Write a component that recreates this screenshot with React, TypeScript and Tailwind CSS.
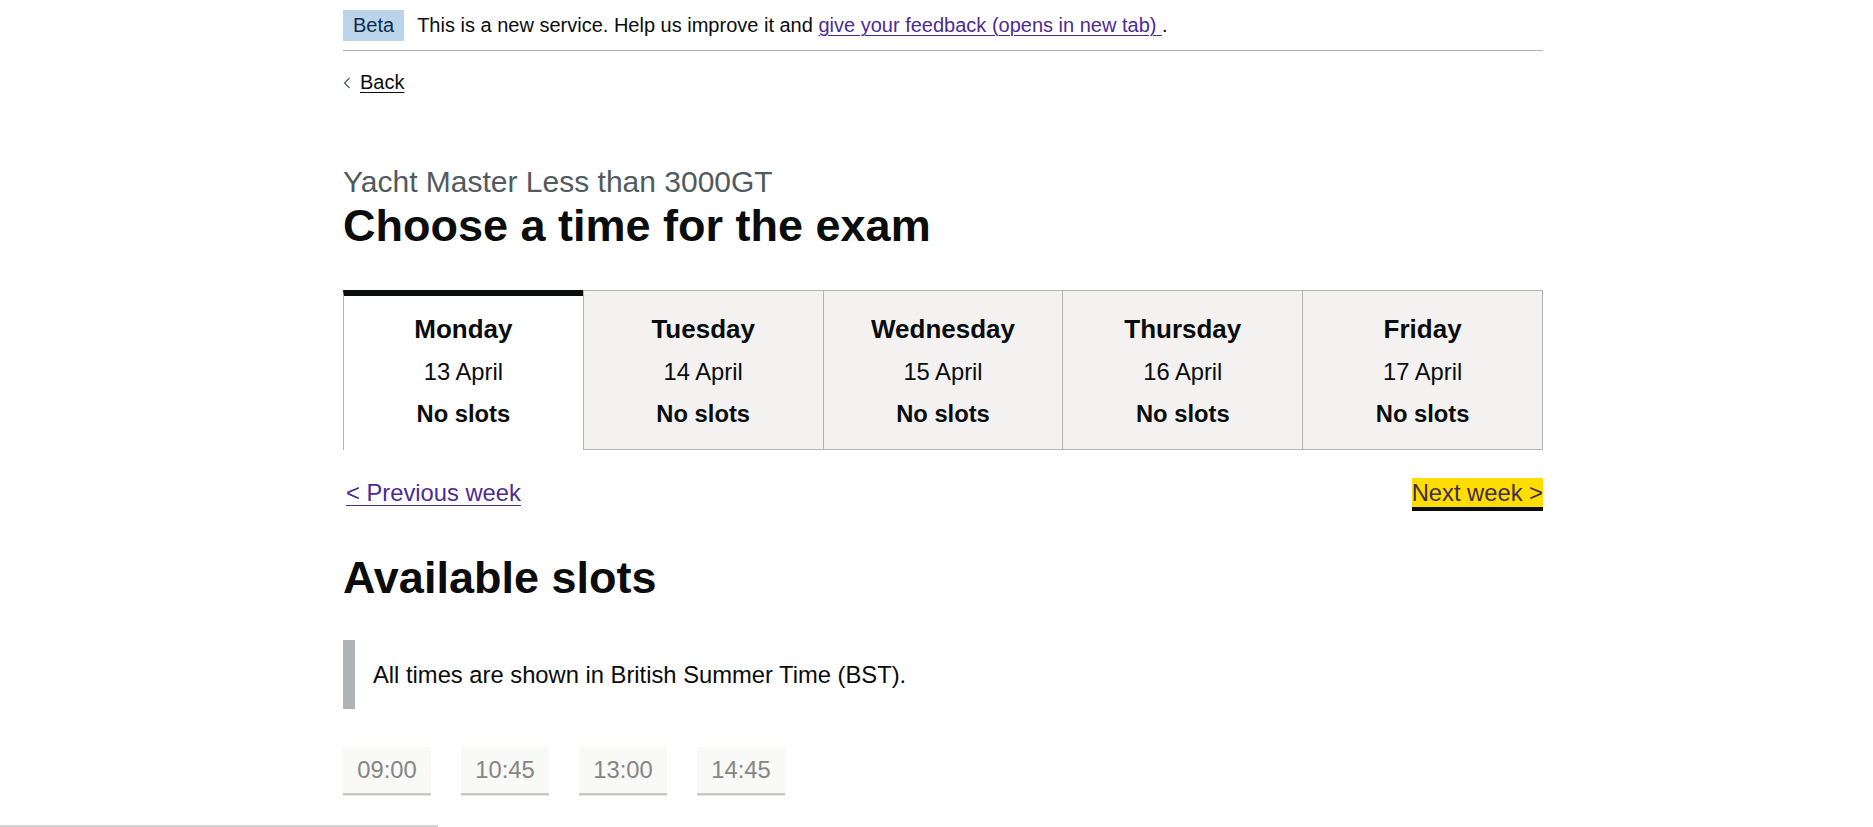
import React from "react";

const days = [
  { name: "Monday", date: "13 April", selected: true },
  { name: "Tuesday", date: "14 April" },
  { name: "Wednesday", date: "15 April" },
  { name: "Thursday", date: "16 April" },
  { name: "Friday", date: "17 April" },
];

const times = ["09:00", "10:45", "13:00", "14:45"];

function DayTab({ name, date, selected }: { name: string; date: string; selected?: boolean }) {
  return (
    <div
      className={
        selected
          ? "h-[160px] pt-[13px] text-center bg-white border-t-[6px] border-t-[#0b0c0c] border-l border-l-[#b1b4b6]"
          : "h-[160px] pt-[18px] text-center bg-[#f3f2f1] border-t border-b border-l border-[#b1b4b6]"
      }
    >
      <div className="h-[42px] leading-[40px] text-[26px] font-bold">{name}</div>
      <div className="h-[42px] leading-[42px] text-[23.75px]">{date}</div>
      <div className="h-[42px] leading-[42px] text-[23.75px] font-bold">No slots</div>
    </div>
  );
}

export default function App() {
  return (
    <div className="min-h-[827px] bg-white font-['Liberation_Sans',Arial,sans-serif] text-[#0b0c0c]">
      <div className="ml-[343px] w-[1200px]">
        {/* phase banner */}
        <div className="flex items-center pt-[10px] pb-[9px] border-b border-[#b1b4b6]">
          <span className="h-[31px] px-[10px] bg-[#bbd4ea] text-[#0c2d4a] text-[20px] leading-[31px]">Beta</span>
          <p className="ml-[13px] text-[20px] leading-[25px]">
            This is a new service. Help us improve it and{" "}
            <a href="#" className="text-[#4c2c92] underline decoration-1 underline-offset-[3px]">
              give your feedback (opens in new tab){" "}
            </a>
            .
          </p>
        </div>

        {/* back link */}
        <a href="#" className="mt-[19px] flex items-center h-[25px] w-fit text-[20px] leading-[25px]">
          <svg width="8" height="12" viewBox="0 0 8 12" className="mr-[9px] mt-[1px]">
            <polyline points="6.5,1 1.5,6 6.5,11" fill="none" stroke="#505a5f" strokeWidth="1.2" />
          </svg>
          <span className="underline decoration-1 underline-offset-[3px]">Back</span>
        </a>

        {/* headings */}
        <span className="mt-[69px] mb-[2px] block text-[30px] leading-[35px] text-[#505a5f]">Yacht Master Less than 3000GT</span>
        <h1 className="text-[45px] leading-[50px] font-bold">Choose a time for the exam</h1>

        {/* day tabs */}
        <div className="mt-[39px] grid grid-cols-5 border-r border-[#b1b4b6]">
          {days.map((d) => (
            <DayTab key={d.name} {...d} />
          ))}
        </div>

        {/* week navigation */}
        <div className="mt-[28px] flex items-start justify-between">
          <a href="#" className="ml-[3px] h-[29px] text-[23.75px] leading-[29px] text-[#4c2c92] underline decoration-1 underline-offset-[4px]">
            &lt; Previous week
          </a>
          <a href="#" className="h-[29px] text-[23.75px] leading-[29px] bg-[#ffdd00] text-[#3f2d56] no-underline shadow-[0_4px_0_#0b0c0c]">
            Next week &gt;
          </a>
        </div>

        <h2 className="mt-[46px] text-[45px] leading-[50px] font-bold">Available slots</h2>

        {/* inset text */}
        <div className="mt-[37px] border-l-[12px] border-[#b1b4b6] py-[19px] pl-[18px] text-[23.75px] leading-[31px]">
          All times are shown in British Summer Time (BST).
        </div>

        {/* time slots */}
        <div className="mt-[38px] flex gap-[30px]">
          {times.map((t) => (
            <button
              key={t}
              disabled
              className="h-[46px] w-[88px] bg-[#f9f9f8] text-[#858585] text-[23.75px] leading-[46px] text-center shadow-[0_2.5px_0_#c8c8c8]"
            >
              {t}
            </button>
          ))}
        </div>
      </div>

      {/* scrollbar thumb at bottom edge */}
      <div className="fixed left-0 bottom-0 h-[2px] w-[438px] bg-[#d4d4d4]" />
    </div>
  );
}
